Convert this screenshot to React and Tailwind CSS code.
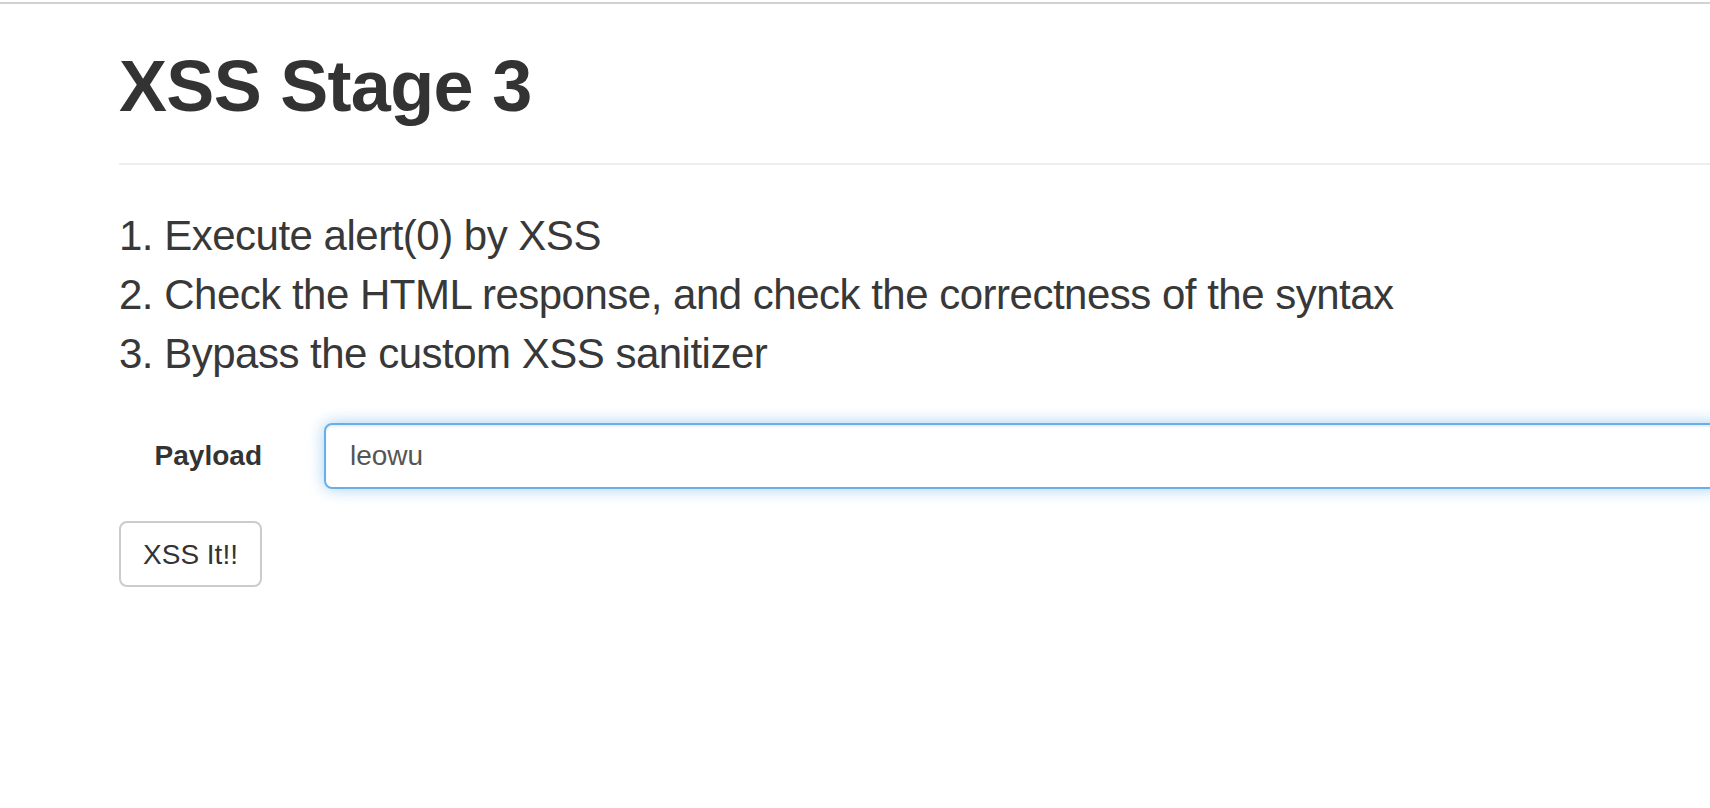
import React from "react";

const App = () => {
    const font = { fontFamily: '"Liberation Sans", Arial, Helvetica, sans-serif' };

    return (
        <div className="h-screen w-full overflow-hidden bg-white text-[#333]" style={font}>
            <div className="mt-[2px] h-[2px] bg-[#d2d2d2]" />
            <div className="w-[1900px] pl-[119px]">
                <div className="border-b-2 border-[#eee] pt-[42px] pb-[37px]">
                    <h1 className="text-[72px] font-bold leading-[80px] tracking-[-0.7px]">XSS Stage 3</h1>
                </div>

                <div className="mt-[41px] text-[42px] leading-[59px] tracking-[-0.5px] text-[#383838]">
                    <div>1. Execute alert(0) by XSS</div>
                    <div>2. Check the HTML response, and check the correctness of the syntax</div>
                    <div>3. Bypass the custom XSS sanitizer</div>
                </div>

                <div className="mt-[40px] flex h-[66px] items-center">
                    <label className="w-[173px] pr-[30px] text-right text-[28px] font-bold">Payload</label>
                    <input
                        className="ml-[32px] h-[66px] flex-1 rounded-[8px] border-2 border-[#66afe9] px-[24px] text-[28px] text-[#555] outline-none shadow-[inset_0_2px_2px_rgba(0,0,0,0.075),0_0_16px_rgba(102,175,233,0.6)]"
                        defaultValue="leowu"
                        readOnly
                    />
                </div>

                <button className="mt-[32px] flex h-[66px] w-[143px] items-center justify-center rounded-[8px] border-2 border-[#ccc] bg-white pt-[2px] text-[28px] text-[#333]">
                    XSS It!!
                </button>
            </div>
        </div>
    );
};

export default App;
